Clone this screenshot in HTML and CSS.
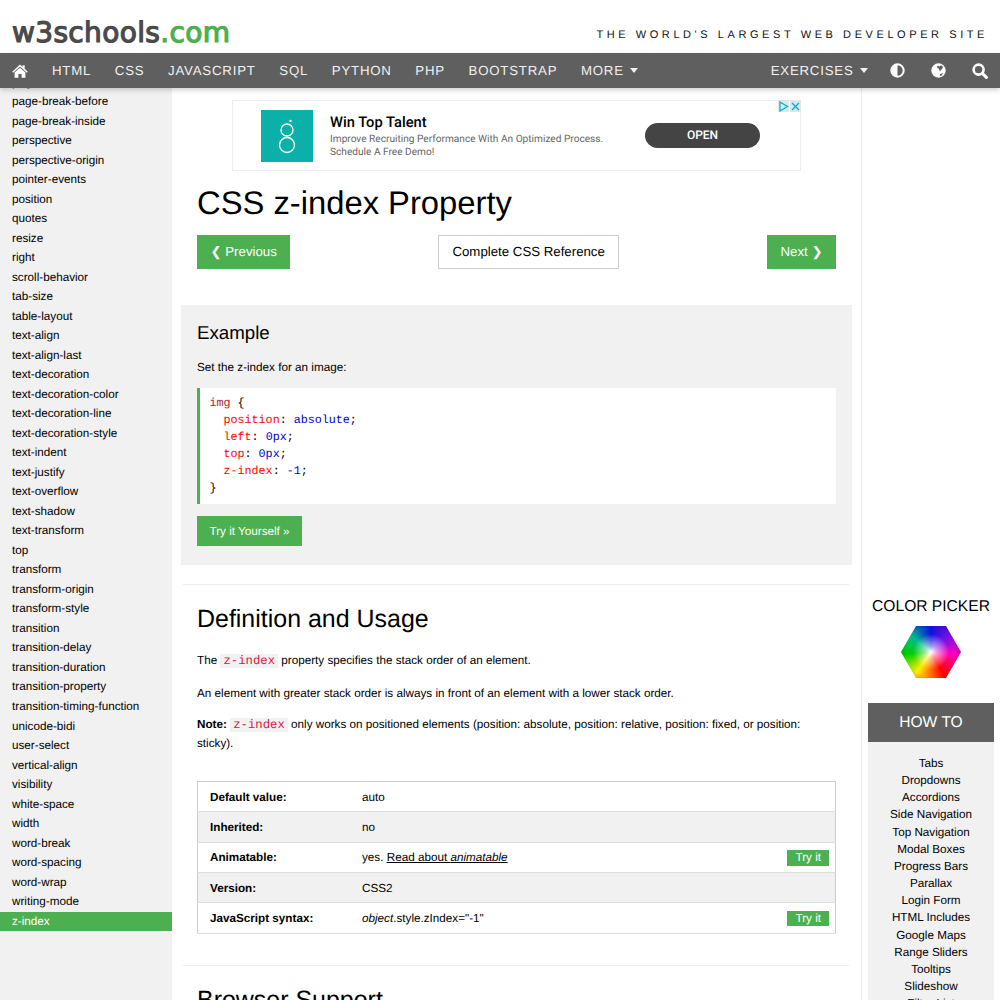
FILE: index.html
```html
<!DOCTYPE html>
<html lang="en">
<head>
    <meta charset="UTF-8">
    <meta name="viewport" content="width=device-width, initial-scale=1.0">
    <title>CSS z-index Property</title>
    <link rel="stylesheet" href="styles.css">
</head>
<body>
    <header class="top">
        <div class="logo">w3schools<span class="logo-com">.com</span></div>
        <div class="tagline">THE WORLD'S LARGEST WEB DEVELOPER SITE</div>
    </header>
    <nav class="nav">
        <a class="nav-icon nav-home">
            <svg width="16" height="14" viewBox="0 0 17 15"><path fill="#fff" d="M8.5 0.6 L11.3 3.2 V1.4 H13.5 V5.2 L16.8 8.2 L15.8 9.3 L8.5 2.7 L1.2 9.3 L0.2 8.2 Z M8.5 4 L14.3 9.2 V14.6 H10.2 V10.6 H6.8 V14.6 H2.7 V9.2 Z"/></svg>
        </a>
        <a>HTML</a>
        <a>CSS</a>
        <a>JAVASCRIPT</a>
        <a>SQL</a>
        <a>PYTHON</a>
        <a>PHP</a>
        <a>BOOTSTRAP</a>
        <a>MORE <i class="caret"></i></a>
        <div class="nav-right">
            <a class="nav-exercises">EXERCISES <i class="caret"></i></a>
            <a class="nav-icon">
                <svg width="15" height="15" viewBox="0 0 15 15"><circle cx="7.5" cy="7.5" r="6.2" fill="none" stroke="#fff" stroke-width="2"/><path fill="#fff" d="M7.5 1.5 A6 6 0 0 0 7.5 13.5 Z"/></svg>
            </a>
            <a class="nav-icon">
                <svg width="15" height="15" viewBox="0 0 15 15"><circle cx="7.5" cy="7.5" r="7.2" fill="#fff"/><path fill="#5f5f5f" d="M6.5 2.5 L8.5 3.5 L10 2.2 L12 3.8 L11 6 L8.8 8.2 L7.8 5.8 L6 4.5 Z M9 11 L12 10 L10.8 12.6 L8.8 13 Z"/></svg>
            </a>
            <a class="nav-icon nav-search">
                <svg width="16" height="16" viewBox="0 0 16 16"><circle cx="6.6" cy="6.6" r="5" fill="none" stroke="#fff" stroke-width="2.6"/><path stroke="#fff" stroke-width="3" stroke-linecap="round" d="M10.6 10.6 L14.4 14.4"/></svg>
            </a>
        </div>
    </nav>
    <div class="layout">
        <aside class="sidebar">
            <a>page-break-after</a>
            <a>page-break-before</a>
            <a>page-break-inside</a>
            <a>perspective</a>
            <a>perspective-origin</a>
            <a>pointer-events</a>
            <a>position</a>
            <a>quotes</a>
            <a>resize</a>
            <a>right</a>
            <a>scroll-behavior</a>
            <a>tab-size</a>
            <a>table-layout</a>
            <a>text-align</a>
            <a>text-align-last</a>
            <a>text-decoration</a>
            <a>text-decoration-color</a>
            <a>text-decoration-line</a>
            <a>text-decoration-style</a>
            <a>text-indent</a>
            <a>text-justify</a>
            <a>text-overflow</a>
            <a>text-shadow</a>
            <a>text-transform</a>
            <a>top</a>
            <a>transform</a>
            <a>transform-origin</a>
            <a>transform-style</a>
            <a>transition</a>
            <a>transition-delay</a>
            <a>transition-duration</a>
            <a>transition-property</a>
            <a>transition-timing-function</a>
            <a>unicode-bidi</a>
            <a>user-select</a>
            <a>vertical-align</a>
            <a>visibility</a>
            <a>white-space</a>
            <a>width</a>
            <a>word-break</a>
            <a>word-spacing</a>
            <a>word-wrap</a>
            <a>writing-mode</a>
            <a class="active">z-index</a>
        </aside>
        <main class="main">
            <div class="ad">
                <div class="ad-logo">
                    <svg width="52" height="52" viewBox="0 0 52 52"><g fill="none" stroke="#fff" stroke-width="1.3"><circle cx="26" cy="20" r="6"/><circle cx="26" cy="35" r="7.5"/></g><circle cx="29.5" cy="11" r="1.2" fill="#fff"/></svg>
                </div>
                <div class="ad-text">
                    <div class="ad-title">Win Top Talent</div>
                    <div class="ad-desc">Improve Recruiting Performance With An Optimized Process.<br>Schedule A Free Demo!</div>
                </div>
                <div class="ad-open">OPEN</div>
                <div class="ad-marks">
                    <span class="ad-mark"><svg width="11" height="11" viewBox="0 0 11 11"><path fill="none" stroke="#00aecd" stroke-width="1.2" d="M2 1 L9.5 5.5 L2 10 Z"/></svg></span>
                    <span class="ad-mark"><svg width="11" height="11" viewBox="0 0 11 11"><path fill="none" stroke="#00aecd" stroke-width="1.3" d="M2 2 L9 9 M9 2 L2 9"/></svg></span>
                </div>
            </div>
            <h1>CSS z-index Property</h1>
            <div class="pager">
                <a class="btn btn-green">&#10094; Previous</a>
                <a class="btn btn-white">Complete CSS Reference</a>
                <a class="btn btn-green">Next &#10095;</a>
            </div>
            <section class="example">
                <h2 class="example-title">Example</h2>
                <p>Set the z-index for an image:</p>
                <div class="code"><span class="sel">img</span> {<br>
&nbsp;&nbsp;<span class="prop">position</span>: <span class="val">absolute</span>;<br>
&nbsp;&nbsp;<span class="prop">left</span>: <span class="val">0px</span>;<br>
&nbsp;&nbsp;<span class="prop">top</span>: <span class="val">0px</span>;<br>
&nbsp;&nbsp;<span class="prop">z-index</span>: <span class="val">-1</span>;<br>
}</div>
                <a class="btn-try">Try it Yourself »</a>
            </section>
            <hr class="rule rule-first">
            <h2 class="section-title">Definition and Usage</h2>
            <p class="para">The <code>z-index</code> property specifies the stack order of an element.</p>
            <p class="para">An element with greater stack order is always in front of an element with a lower stack order.</p>
            <p class="para para-note"><b>Note:</b> <code>z-index</code> only works on positioned elements (position: absolute, position: relative, position: fixed, or position: sticky).</p>
            <table class="props">
                <tr><th>Default value:</th><td>auto</td><td></td></tr>
                <tr><th>Inherited:</th><td>no</td><td></td></tr>
                <tr><th>Animatable:</th><td>yes. <u>Read about <i>animatable</i></u></td><td class="try-cell"><a class="try-small">Try it</a></td></tr>
                <tr><th>Version:</th><td>CSS2</td><td></td></tr>
                <tr><th>JavaScript syntax:</th><td><i>object</i>.style.zIndex="-1"</td><td class="try-cell"><a class="try-small">Try it</a></td></tr>
            </table>
            <hr class="rule rule-second">
            <h2 class="section-title">Browser Support</h2>
        </main>
        <aside class="right">
            <div class="picker-title">COLOR PICKER</div>
            <div class="hexagon"></div>
            <div class="howto-title">HOW TO</div>
            <div class="howto-list">
                <a>Tabs</a>
                <a>Dropdowns</a>
                <a>Accordions</a>
                <a>Side Navigation</a>
                <a>Top Navigation</a>
                <a>Modal Boxes</a>
                <a>Progress Bars</a>
                <a>Parallax</a>
                <a>Login Form</a>
                <a>HTML Includes</a>
                <a>Google Maps</a>
                <a>Range Sliders</a>
                <a>Tooltips</a>
                <a>Slideshow</a>
                <a>Filter List</a>
            </div>
        </aside>
    </div>
</body>
</html>
```

FILE: styles.css
```css
html, body {
    height: 1000px;
    overflow: hidden;
}
body {
    margin: 0;
    font-family: "Liberation Sans", Arial, sans-serif;
    font-size: 11.7px;
    color: #000;
    background: #fff;
    text-rendering: geometricPrecision;
}
.top {
    height: 53px;
    display: flex;
    justify-content: space-between;
    padding: 0 12px 0 12px;
}
.logo {
    font-family: "DejaVu Sans", sans-serif;
    font-size: 28px;
    letter-spacing: 0.35px;
    -webkit-text-stroke: 1.2px currentColor;
    line-height: 30px;
    padding-top: 18px;
    color: #4a4a4a;
}
.logo-com {
    color: #4CAF50;
}
.tagline {
    font-size: 11px;
    letter-spacing: 3.58px;
    padding-top: 29px;
    color: #111;
    white-space: nowrap;
}
.nav {
    position: relative;
    z-index: 2;
    height: 35px;
    display: flex;
    align-items: center;
    background: #5f5f5f;
    box-shadow: 0 2px 5px rgba(0, 0, 0, 0.2);
    color: #f1f1f1;
    font-size: 13.26px;
    letter-spacing: 0.78px;
    padding-left: 12px;
}
.nav a {
    margin-right: 23.65px;
    white-space: nowrap;
}
.nav .nav-home {
    margin-right: 24px;
}
.nav-icon {
    display: flex;
}
.nav-right {
    margin-left: auto;
    display: flex;
    align-items: center;
}
.nav-right a {
    margin-right: 26px;
}
.nav-right .nav-exercises {
    margin-right: 22px;
}
.nav-right .nav-search {
    margin-right: 12px;
}
.caret {
    display: inline-block;
    width: 0;
    height: 0;
    margin-left: 2px;
    vertical-align: 2px;
    border-left: 4px solid transparent;
    border-right: 4px solid transparent;
    border-top: 5px solid #f1f1f1;
}
.layout {
    display: flex;
    height: 912px;
}
.sidebar {
    width: 172px;
    flex: none;
    background: #f1f1f1;
}
.sidebar a {
    display: block;
    padding-left: 12px;
    line-height: 19.52px;
    color: #000;
}
.sidebar a:first-child {
    margin-top: -15.5px;
}
.sidebar .active {
    background: #4CAF50;
    color: #fff;
}
.main {
    width: 689px;
    flex: none;
    padding: 0 25px;
    box-sizing: border-box;
    overflow: hidden;
}
.ad {
    position: relative;
    box-sizing: border-box;
    width: 569px;
    height: 71px;
    margin: 12px 0 0 35px;
    border: 1px solid #eee;
    display: flex;
    align-items: center;
    padding-left: 28px;
    font-family: Roboto, sans-serif;
}
.ad-logo {
    width: 52px;
    height: 52px;
    background: #0bb0a8;
}
.ad-text {
    margin-left: 17px;
    width: 315px;
}
.ad-title {
    font-size: 14.7px;
    font-weight: 500;
    line-height: 20px;
    margin-bottom: 1px;
}
.ad-desc {
    font-size: 10.15px;
    line-height: 13px;
    color: #666;
}
.ad-open {
    width: 115px;
    height: 25px;
    line-height: 25px;
    margin-top: -1px;
    border-radius: 13px;
    background: #444;
    color: #fff;
    text-align: center;
    font-size: 12px;
    font-weight: 500;
}
.ad-marks {
    position: absolute;
    top: -1px;
    right: -1px;
    display: flex;
    gap: 1px;
}
.ad-mark {
    display: flex;
    align-items: center;
    justify-content: center;
    width: 11px;
    height: 12px;
    background: #dfe6e8;
}
h1 {
    font-size: 32.76px;
    font-weight: 400;
    line-height: 40px;
    margin: 12px 0 12px;
}
.pager {
    display: flex;
    justify-content: space-between;
    margin-bottom: 36px;
}
.btn {
    box-sizing: border-box;
    height: 34px;
    line-height: 32px;
    padding: 0 12.5px;
    font-size: 13.26px;
    border: 1px solid transparent;
}
.btn-green {
    background: #4CAF50;
    color: #fff;
}
.btn-white {
    padding: 0 13px;
    background: #fff;
    color: #000;
    border-color: #ccc;
}
.example {
    margin: 0 -16px;
    padding: 1px 16px 19px;
    height: 260px;
    box-sizing: border-box;
    background: #f1f1f1;
}
.example-title {
    font-size: 18.72px;
    font-weight: 400;
    line-height: 24px;
    margin: 15px 0 14px;
}
.example p {
    margin: 0 0 11px;
    line-height: 18px;
}
.code {
    border-left: 3px solid #4CAF50;
    background: #fff;
    padding: 6.5px 9.5px;
    height: 116px;
    box-sizing: border-box;
    font-family: "Liberation Mono", monospace;
    font-size: 11.7px;
    line-height: 17.1px;
    margin-bottom: 12px;
}
.sel {
    color: #a52a2a;
}
.prop {
    color: #f00;
}
.val {
    color: #0000cd;
}
.btn-try {
    display: inline-block;
    background: #4CAF50;
    color: #fff;
    height: 30px;
    line-height: 31px;
    padding: 0 12.5px;
}
.rule {
    border: 0;
    border-top: 1px solid #eee;
    margin-left: -14px;
    margin-right: -13px;
}
.rule-first {
    margin-top: 19px;
    margin-bottom: 0;
}
.section-title {
    font-size: 24.96px;
    font-weight: 400;
    line-height: 30px;
    margin: 19px 0 0;
}
.para {
    margin: 18px 0 0;
    line-height: 18.7px;
}
.para + .para {
    margin-top: 14px;
}
.para + .para-note {
    margin-top: 13px;
}
code {
    font-family: "Liberation Mono", monospace;
    font-size: 12.3px;
    color: #dc143c;
    background: #f1f1f1;
    padding: 0 3px;
}
.props {
    width: 100%;
    margin-top: 27px;
    border-collapse: collapse;
    border: 1px solid #ccc;
}
.props tr {
    height: 30.4px;
    border-bottom: 1px solid #ddd;
}
.props tr:nth-child(even) {
    background: #f1f1f1;
}
.props th {
    width: 140px;
    padding: 1px 12px 0;
    text-align: left;
}
.props td {
    padding: 1px 0 0;
}
.props .try-cell {
    padding-right: 6px;
    text-align: right;
}
.try-small {
    display: inline-block;
    background: #4CAF50;
    color: #fff;
    padding: 0 8px;
    line-height: 15.5px;
}
.rule-second {
    margin-top: 31px;
    margin-bottom: 0;
}
.right {
    flex: 1;
    border-left: 1px solid #eee;
    padding: 0 6px;
    text-align: center;
    min-width: 0;
}
.picker-title {
    margin-top: 508.5px;
    font-size: 15.6px;
    line-height: 20px;
}
.hexagon {
    width: 60px;
    height: 52px;
    margin: 9.5px auto 25px;
    clip-path: polygon(25% 0, 75% 0, 100% 50%, 75% 100%, 25% 100%, 0 50%);
    background:
        radial-gradient(circle at 50% 50%, #fff 0, rgba(255, 255, 255, 0.6) 14%, rgba(255, 255, 255, 0) 45%, rgba(0, 0, 0, 0) 62%, rgba(0, 0, 0, 0.45) 100%),
        conic-gradient(from 0deg, #1010e0, #7a10e0 50deg, #ff00c0 95deg, #ff0000 150deg, #ff9000 190deg, #ffee00 215deg, #00d000 265deg, #00b890 310deg, #0050c0 340deg, #1010e0);
}
.howto-title {
    height: 39px;
    background: #5f5f5f;
    color: #fff;
    font-size: 15.6px;
    line-height: 40px;
}
.howto-list {
    background: #f1f1f1;
    padding-top: 13px;
    height: 400px;
}
.howto-list a {
    display: block;
    line-height: 17.15px;
    color: #000;
}
```
